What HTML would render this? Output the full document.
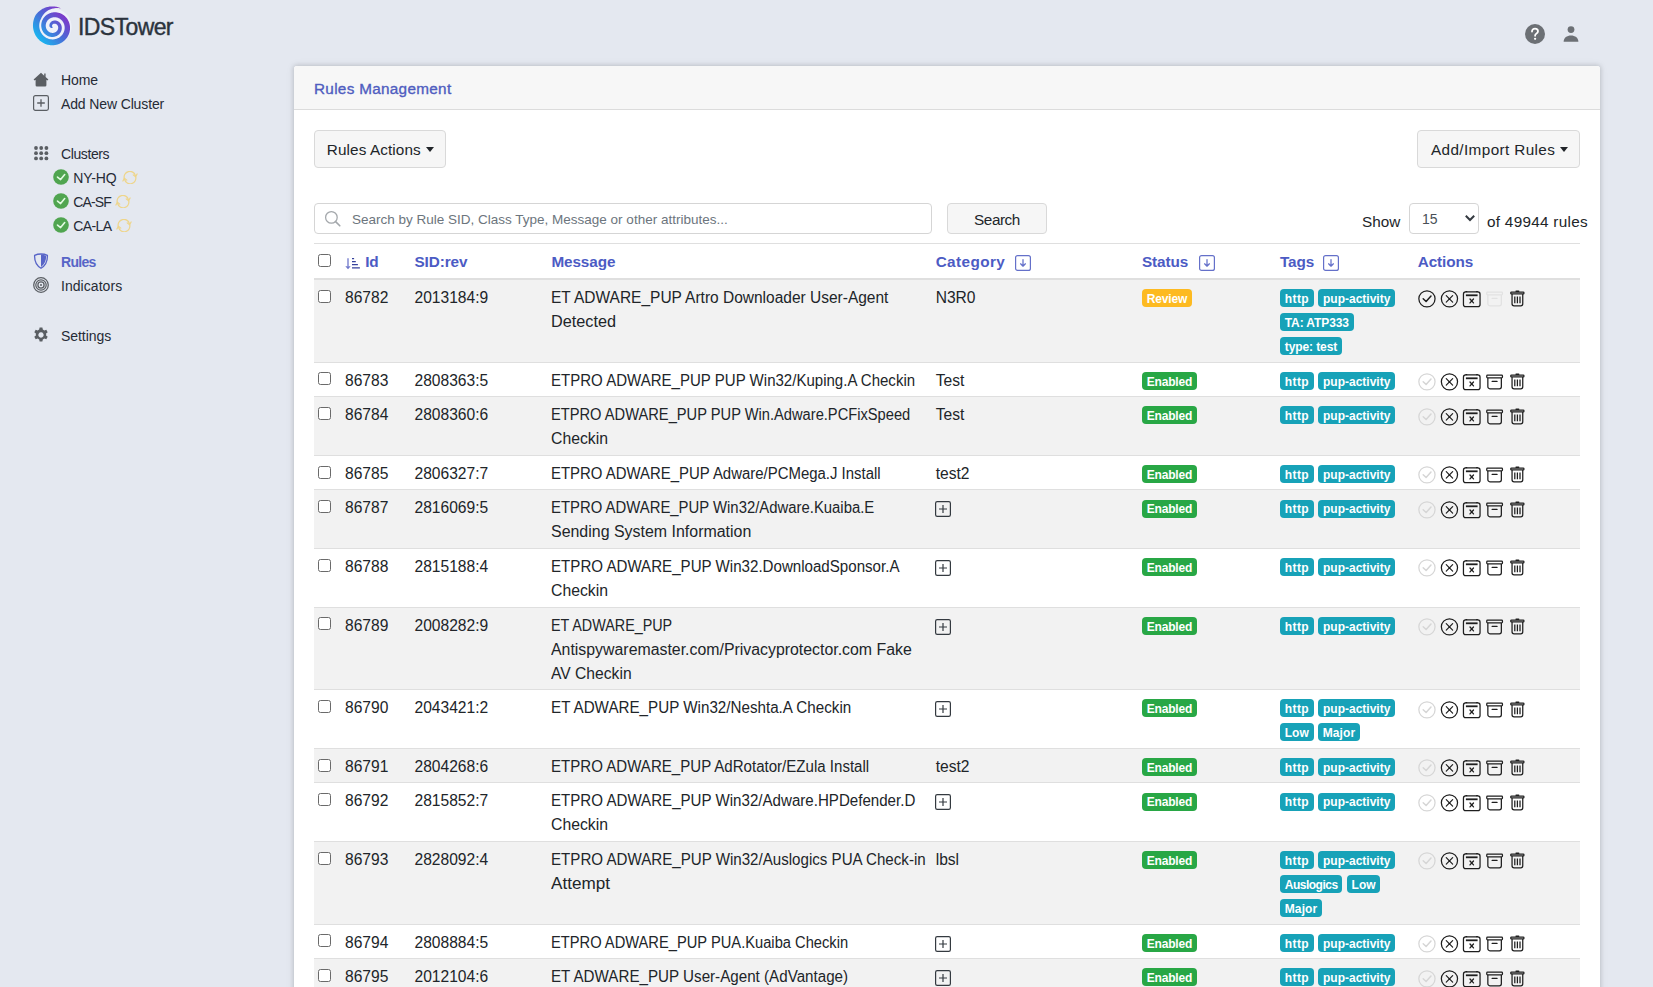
<!DOCTYPE html>
<html><head><meta charset="utf-8"><title>IDSTower - Rules</title>
<style>
*{box-sizing:border-box}
html,body{margin:0;padding:0}
body{width:1653px;height:987px;overflow:hidden;position:relative;background:#e4e8f0;font-family:"Liberation Sans",sans-serif;color:#212529;font-size:15.3px;line-height:24px}
td{font-size:15.6px}
.abs{position:absolute}
.logo-text{position:absolute;left:78px;top:11.6px;font-size:23px;line-height:30px;color:#2b333d;letter-spacing:-0.6px;-webkit-text-stroke:0.4px #2b333d}
.nav{position:absolute;left:0;font-size:14px;line-height:24px;color:#262b36;white-space:nowrap}
.nav .t{position:absolute;left:61px;top:0.6px}
.nav svg{position:absolute}
.card{position:absolute;left:294px;top:66px;width:1306px;height:940px;background:#fff;box-shadow:0 0 4px 1px rgba(0,0,0,.13),0 0 10px 1px rgba(0,0,0,.05);border-radius:3px}
.card-h{position:absolute;left:0;top:0;width:100%;height:44px;background:#f7f7f7;border-radius:3px 3px 0 0;border-bottom:1px solid #dcdcdc}
.card-h .t{position:absolute;left:20px;top:11px;color:#4f5dc0;font-size:15.3px;line-height:24px;letter-spacing:0.3px;-webkit-text-stroke:0.35px #4f5dc0}
.btn{position:absolute;background:#f6f6f6;border:1px solid #d9d9d9;border-radius:4px;color:#212529;font-size:15.3px;line-height:24px;white-space:nowrap}
.caret{display:inline-block;width:0;height:0;border-left:4.1px solid transparent;border-right:4.1px solid transparent;border-top:5px solid #212529;vertical-align:3.4px;margin-left:4.8px}
.input{position:absolute;background:#fff;border:1px solid #d5d5d5;border-radius:4px}
table{position:absolute;left:314px;top:243.4px;width:1266px;border-collapse:collapse;table-layout:fixed}
td,th{padding:6px 4.8px 3.6px;vertical-align:top;border-top:1px solid #dfdfdf;text-align:left;white-space:nowrap;overflow:visible}
th{border-bottom:2px solid #dfdfdf;color:#4c5bc4;font-weight:bold;letter-spacing:-0.1px}
tr.odd td{background:#f2f2f2}
.cb{display:inline-block;width:13px;height:13px;border:1px solid #6a6a6a;border-radius:2.5px;background:#fff;margin-left:-0.8px;vertical-align:-1px;position:relative;top:-1.2px}
.badge{display:inline-block;font-size:12px;font-weight:bold;line-height:12px;padding:3.8px 4.8px 2.2px;border-radius:4px;color:#fff;vertical-align:0px;white-space:nowrap}
.bw{background:#fdba21}
.bs{background:#28a745}
.bi{background:#17a2b8}
.ic{display:inline-block;width:22.7px;height:18px;color:#1e1e1e;vertical-align:-5.5px}
.ic svg{display:block;overflow:visible}
.ic.dis{color:#d6d6d6}
.ic.dis2{color:#e2e2e2}
.pbox svg{display:inline-block;vertical-align:-4px;margin-left:-1px}
td.msg .ml{display:inline-block;position:relative;left:-1.3px;transform-origin:0 0}
.bi.h{letter-spacing:0.45px}
.sbox svg{display:inline-block;vertical-align:-3.5px;margin-left:11px}
</style></head>
<body>
<!-- logo -->
<svg class="abs" style="left:28px;top:2px" width="51" height="51" viewBox="0 0 48 48"><defs><linearGradient id="lg" x1="0.1" y1="0.9" x2="0.9" y2="0.1"><stop offset="0" stop-color="#12c0f4"/><stop offset="0.5" stop-color="#4a6bd6"/><stop offset="1" stop-color="#8e28c6"/></linearGradient></defs><circle cx="24" cy="23.3" r="17" fill="#eef1fa"/><path d="M23.34 24.50 L23.27 24.51 L23.19 24.51 L23.12 24.51 L23.04 24.51 L22.93 24.53 L22.82 24.55 L22.71 24.57 L22.59 24.57 L22.47 24.57 L22.35 24.56 L22.23 24.55 L22.10 24.52 L21.98 24.49 L21.85 24.45 L21.72 24.41 L21.59 24.35 L21.46 24.29 L21.34 24.22 L21.21 24.14 L21.09 24.05 L20.97 23.96 L20.85 23.85 L20.73 23.74 L20.62 23.62 L20.52 23.49 L20.41 23.36 L20.32 23.21 L20.28 23.07 L20.24 22.91 L20.21 22.76 L20.18 22.60 L20.16 22.44 L20.15 22.28 L20.14 22.11 L20.14 21.94 L20.15 21.77 L20.16 21.60 L20.19 21.43 L20.22 21.26 L20.26 21.09 L20.30 20.91 L20.35 20.74 L20.42 20.57 L20.48 20.40 L20.56 20.23 L20.64 20.06 L20.74 19.90 L20.84 19.73 L20.94 19.57 L21.06 19.42 L21.18 19.26 L21.31 19.11 L21.45 18.97 L21.60 18.83 L21.75 18.69 L21.91 18.56 L22.07 18.43 L22.24 18.31 L22.42 18.20 L22.61 18.09 L22.80 17.99 L22.99 17.90 L23.19 17.81 L23.40 17.74 L23.61 17.67 L23.83 17.60 L24.05 17.55 L24.27 17.51 L24.50 17.47 L24.73 17.44 L24.96 17.42 L25.20 17.42 L25.43 17.42 L25.67 17.43 L25.91 17.45 L26.15 17.48 L26.39 17.52 L26.64 17.57 L26.88 17.63 L27.12 17.70 L27.36 17.79 L27.59 17.88 L27.83 17.98 L28.06 18.09 L28.29 18.21 L28.51 18.35 L28.73 18.49 L28.95 18.64 L29.16 18.80 L29.37 18.98 L29.57 19.16 L29.77 19.35 L29.96 19.55 L30.14 19.75 L30.31 19.97 L30.48 20.20 L30.64 20.43 L30.79 20.67 L30.93 20.92 L31.06 21.17 L31.18 21.44 L31.29 21.71 L31.40 21.98 L31.49 22.26 L31.57 22.55 L31.64 22.84 L31.70 23.13 L31.74 23.43 L31.78 23.73 L31.80 24.04 L31.81 24.35 L31.81 24.66 L31.80 24.97 L31.77 25.28 L31.73 25.59 L31.68 25.91 L31.61 26.22 L31.54 26.53 L31.45 26.84 L31.34 27.15 L31.23 27.46 L31.10 27.76 L30.95 28.06 L30.80 28.35 L30.63 28.64 L30.45 28.92 L30.26 29.20 L30.06 29.47 L29.84 29.74 L29.62 30.00 L29.38 30.25 L29.13 30.49 L28.87 30.72 L28.60 30.94 L28.31 31.16 L28.02 31.36 L27.72 31.55 L27.41 31.74 L27.10 31.91 L26.77 32.06 L26.44 32.21 L26.09 32.34 L25.75 32.46 L25.39 32.57 L25.03 32.66 L24.67 32.74 L24.30 32.80 L23.92 32.85 L23.55 32.89 L23.16 32.91 L22.78 32.92 L22.40 32.91 L22.01 32.88 L21.62 32.84 L21.24 32.78 L20.85 32.71 L20.47 32.63 L20.08 32.52 L19.70 32.40 L19.33 32.27 L18.95 32.12 L18.59 31.95 L18.22 31.77 L17.87 31.58 L17.51 31.37 L17.17 31.14 L16.83 30.90 L16.51 30.65 L16.19 30.38 L15.88 30.10 L15.58 29.80 L15.29 29.50 L15.01 29.18 L14.74 28.84 L14.49 28.50 L14.25 28.14 L14.02 27.77 L13.81 27.40 L13.61 27.01 L13.42 26.61 L13.25 26.21 L13.10 25.80 L12.96 25.38 L12.83 24.95 L12.73 24.51 L12.64 24.07 L12.57 23.63 L12.51 23.18 L12.47 22.73 L12.45 22.27 L12.45 21.81 L12.47 21.35 L12.50 20.89 L12.56 20.43 L12.63 19.97 L12.72 19.51 L12.83 19.05 L12.95 18.60 L13.10 18.15 L13.26 17.70 L13.44 17.26 L13.64 16.83 L13.86 16.40 L14.10 15.98 L14.35 15.56 L14.62 15.16 L14.91 14.76 L15.21 14.38 L15.53 14.00 L15.86 13.64 L16.21 13.29 L16.58 12.95 L16.96 12.63 L17.35 12.32 L17.76 12.02 L18.18 11.74 L18.61 11.48 L19.06 11.23 L19.51 11.00 L19.98 10.78 L20.46 10.58 L20.94 10.41 L21.43 10.25 L21.93 10.10 L22.44 9.98 L22.96 9.88 L23.48 9.80 L24.00 9.74 L24.53 9.70 L25.06 9.68 L25.59 9.68 L26.13 9.70 L26.66 9.74 L27.20 9.81 L27.73 9.89 L28.27 10.00 L28.80 10.13 L29.32 10.28 L29.84 10.45 L30.36 10.64 L30.87 10.85 L31.37 11.09 L31.87 11.34 L32.35 11.61 L32.83 11.91 L33.30 12.22 L33.75 12.55 L34.20 12.90 L34.63 13.27 L35.04 13.66 L35.45 14.07 L35.84 14.49 L36.21 14.93 L36.56 15.38 L36.90 15.85 L37.22 16.33 L37.53 16.83 L37.81 17.34 L38.08 17.87 L38.32 18.40 L38.55 18.95 L38.75 19.50 L38.93 20.07 L39.09 20.64 L39.23 21.22 L39.34 21.81 L39.44 22.41 L39.51 23.01 L39.55 23.61 L39.57 24.22 L39.57 24.82 L39.55 25.44 L39.50 26.05 L39.42 26.66 L39.33 27.27 L39.20 27.87 L39.06 28.47 L38.89 29.07 L38.69 29.67 L38.47 30.25 L38.23 30.83 L37.97 31.40 L37.68 31.97 L37.37 32.52 L37.03 33.06 L36.68 33.59 L36.30 34.10 L35.90 34.61 L35.48 35.09 L35.04 35.57 L34.59 36.02 L34.11 36.46 L33.61 36.88 L33.10 37.29 L32.57 37.67 L32.02 38.03 L31.46 38.38 L30.88 38.70 L30.29 39.00 L29.69 39.27 L29.08 39.53 L28.45 39.76 L27.81 39.96 L27.17 40.14 L26.51 40.30 L25.85 40.43 L25.18 40.53 L24.50 40.61 L23.83 40.67 L23.14 40.69 L22.46 40.69 L21.77 40.66 L21.09 40.61 L20.40 40.53 L19.72 40.42 L19.04 40.28 L18.36 40.12 L17.69 39.93 L17.02 39.71 L16.37 39.47 L15.72 39.20 L15.08 38.90 L14.45 38.58 L13.83 38.23 L13.22 37.86 L12.63 37.46 L12.05 37.04 L11.49 36.60 L10.94 36.13 L10.41 35.64 L9.90 35.13 L9.41 34.60 L8.94 34.05 L8.49 33.48 L8.06 32.89 L7.65 32.28 L7.27 31.65 L6.91 31.01 L6.58 30.35 L6.27 29.68 L5.98 29.00 L5.72 28.30 L5.49 27.59 L5.29 26.87 L5.11 26.15 L4.97 25.41 L4.85 24.67 L4.76 23.92 L4.70 23.16 L4.67 22.41 L4.67 21.65 L4.70 20.88 L4.75 20.12 L4.84 19.36 L4.96 18.60 L5.11 17.85 L5.29 17.10 L5.50 16.35 L5.73 15.62 L6.00 14.89 L6.30 14.16 L6.62 13.45 L6.98 12.76 L7.36 12.07 L7.80 11.42 L8.30 10.82 L8.83 10.24 L9.38 9.68 L9.95 9.15 L10.54 8.64 L11.14 8.15 L11.77 7.69 L12.41 7.26 L13.06 6.85 L13.73 6.47 L14.41 6.12 L15.11 5.79 L15.82 5.50 L16.53 5.23 L17.25 4.99 L17.98 4.78 L18.72 4.60 L19.46 4.45 L20.21 4.33 L20.96 4.24 L21.71 4.17 L22.46 4.14 L23.20 4.14 L23.95 4.17 L24.69 4.22 L25.43 4.31 L26.16 4.43 L26.89 4.57 L27.60 4.74 L28.31 4.94 L29.01 5.17 L29.70 5.42 L30.37 5.70 L31.03 6.00 L31.03 6.00 L30.31 5.87 L29.58 5.77 L28.86 5.70 L28.14 5.66 L27.43 5.65 L26.72 5.66 L26.02 5.71 L25.32 5.78 L24.64 5.88 L23.96 6.00 L23.29 6.15 L22.64 6.33 L22.00 6.53 L21.37 6.75 L20.75 7.00 L20.15 7.27 L19.57 7.56 L19.00 7.87 L18.45 8.20 L17.92 8.56 L17.41 8.92 L16.92 9.31 L16.44 9.71 L15.99 10.13 L15.55 10.56 L15.14 11.01 L14.75 11.47 L14.38 11.94 L14.04 12.42 L13.71 12.91 L13.41 13.41 L13.13 13.91 L12.88 14.42 L12.64 14.94 L12.39 15.44 L12.13 15.92 L11.89 16.41 L11.66 16.90 L11.46 17.41 L11.28 17.92 L11.12 18.44 L10.98 18.96 L10.86 19.48 L10.76 20.01 L10.68 20.54 L10.62 21.07 L10.58 21.60 L10.57 22.13 L10.57 22.66 L10.60 23.19 L10.65 23.71 L10.71 24.23 L10.80 24.75 L10.91 25.26 L11.03 25.76 L11.18 26.26 L11.34 26.75 L11.53 27.23 L11.73 27.71 L11.95 28.17 L12.18 28.62 L12.44 29.06 L12.71 29.50 L12.99 29.91 L13.29 30.32 L13.61 30.71 L13.94 31.09 L14.28 31.46 L14.64 31.81 L15.01 32.14 L15.39 32.46 L15.78 32.76 L16.18 33.05 L16.59 33.32 L17.01 33.57 L17.44 33.81 L17.88 34.02 L18.32 34.22 L18.77 34.41 L19.22 34.57 L19.68 34.71 L20.15 34.84 L20.61 34.95 L21.08 35.04 L21.55 35.11 L22.02 35.16 L22.49 35.19 L22.96 35.20 L23.43 35.20 L23.90 35.18 L24.37 35.14 L24.83 35.08 L25.29 35.00 L25.74 34.91 L26.19 34.80 L26.63 34.67 L27.06 34.52 L27.49 34.36 L27.91 34.18 L28.32 33.99 L28.72 33.78 L29.11 33.56 L29.49 33.32 L29.86 33.07 L30.22 32.80 L30.56 32.52 L30.90 32.23 L31.22 31.93 L31.53 31.61 L31.82 31.29 L32.10 30.95 L32.37 30.61 L32.62 30.26 L32.86 29.89 L33.08 29.52 L33.28 29.15 L33.47 28.76 L33.65 28.38 L33.81 27.98 L33.95 27.58 L34.08 27.18 L34.19 26.77 L34.28 26.36 L34.36 25.95 L34.42 25.54 L34.46 25.13 L34.49 24.72 L34.50 24.31 L34.50 23.90 L34.48 23.49 L34.44 23.08 L34.39 22.68 L34.32 22.28 L34.24 21.89 L34.14 21.50 L34.03 21.11 L33.90 20.74 L33.76 20.37 L33.60 20.00 L33.43 19.65 L33.25 19.30 L33.06 18.96 L32.85 18.63 L32.63 18.31 L32.40 18.00 L32.16 17.70 L31.90 17.41 L31.64 17.14 L31.37 16.87 L31.09 16.62 L30.80 16.37 L30.50 16.15 L30.19 15.93 L29.88 15.73 L29.56 15.54 L29.23 15.36 L28.90 15.20 L28.57 15.05 L28.23 14.91 L27.88 14.79 L27.54 14.69 L27.19 14.59 L26.84 14.51 L26.48 14.45 L26.13 14.40 L25.78 14.36 L25.42 14.34 L25.07 14.33 L24.72 14.34 L24.37 14.36 L24.02 14.39 L23.68 14.44 L23.34 14.50 L23.01 14.57 L22.67 14.66 L22.35 14.75 L22.03 14.87 L21.71 14.99 L21.40 15.12 L21.10 15.27 L20.81 15.43 L20.52 15.59 L20.25 15.77 L19.98 15.96 L19.72 16.16 L19.46 16.36 L19.22 16.58 L18.99 16.80 L18.77 17.04 L18.55 17.28 L18.35 17.52 L18.16 17.78 L17.98 18.03 L17.81 18.30 L17.66 18.57 L17.51 18.84 L17.38 19.12 L17.26 19.41 L17.15 19.69 L17.05 19.98 L16.96 20.27 L16.89 20.57 L16.82 20.86 L16.77 21.15 L16.74 21.45 L16.71 21.74 L16.69 22.04 L16.69 22.33 L16.70 22.62 L16.72 22.91 L16.75 23.20 L16.79 23.48 L16.85 23.77 L16.91 24.04 L16.98 24.32 L17.07 24.58 L17.16 24.85 L17.27 25.11 L17.38 25.36 L17.51 25.60 L17.64 25.84 L17.78 26.08 L17.93 26.30 L18.09 26.52 L18.25 26.73 L18.43 26.94 L18.61 27.13 L18.79 27.32 L18.98 27.50 L19.18 27.67 L19.39 27.83 L19.60 27.98 L19.81 28.12 L20.03 28.25 L20.25 28.37 L20.47 28.49 L20.70 28.59 L20.93 28.69 L21.16 28.77 L21.40 28.85 L21.63 28.91 L21.87 28.97 L22.11 29.01 L22.35 29.05 L22.58 29.07 L22.82 29.09 L23.06 29.09 L23.29 29.09 L23.52 29.08 L23.75 29.06 L23.98 29.03 L24.21 28.99 L24.43 28.94 L24.65 28.88 L24.86 28.82 L25.07 28.75 L25.28 28.67 L25.48 28.58 L25.67 28.48 L25.86 28.38 L26.05 28.27 L26.23 28.15 L26.40 28.03 L26.57 27.90 L26.73 27.77 L26.88 27.63 L27.03 27.49 L27.17 27.34 L27.31 27.18 L27.43 27.02 L27.55 26.86 L27.66 26.70 L27.77 26.53 L27.86 26.36 L27.95 26.19 L28.03 26.01 L28.10 25.83 L28.17 25.65 L28.23 25.47 L28.28 25.29 L28.32 25.11 L28.35 24.93 L28.38 24.75 L28.40 24.57 L28.41 24.39 L28.41 24.21 L28.41 24.03 L28.40 23.86 L28.38 23.68 L28.36 23.51 L28.33 23.35 L28.29 23.18 L28.25 23.02 L28.20 22.86 L28.14 22.70 L28.08 22.55 L28.01 22.40 L27.94 22.26 L27.86 22.12 L27.78 21.98 L27.69 21.85 L27.60 21.73 L27.51 21.61 L27.41 21.49 L27.30 21.38 L27.19 21.28 L27.08 21.18 L26.97 21.09 L26.85 21.00 L26.74 20.92 L26.62 20.84 L26.49 20.77 L26.37 20.71 L26.24 20.65 L26.12 20.59 L25.99 20.55 L25.86 20.51 L25.74 20.47 L25.61 20.44 L25.48 20.42 L25.35 20.40 L25.23 20.39 L25.10 20.38 L24.98 20.38 L24.86 20.38 L24.74 20.39 L24.62 20.40 L24.50 20.42 L24.39 20.44 L24.27 20.47 L24.16 20.51 L24.06 20.54 L23.95 20.58 L23.85 20.63 L23.76 20.67 L23.66 20.73 L23.57 20.78 L23.49 20.84 L23.40 20.90 L23.33 20.97 L23.25 21.03 L23.18 21.10 L23.11 21.17 L23.05 21.24 L22.99 21.32 L22.94 21.40 L22.89 21.47 L22.84 21.55 L22.80 21.63 L22.76 21.71 L22.73 21.79 L22.70 21.87 L22.68 21.95 L22.66 22.03 L22.64 22.11 L22.63 22.19 L22.62 22.27 L22.62 22.34 L22.62 22.42 L22.62 22.49 L22.63 22.57 L22.64 22.64 L22.65 22.71 L22.67 22.78 L22.69 22.84 L22.71 22.91 L22.74 22.97 L22.76 23.02 L22.80 23.08 L22.83 23.13 L22.86 23.18 L22.90 23.23 L22.90 23.28 L22.89 23.32 L22.89 23.37 L22.88 23.42 L22.88 23.46 L22.89 23.51 L22.89 23.56 L22.90 23.61 L22.91 23.65 L22.92 23.70 L22.93 23.75 L22.95 23.80 L22.97 23.84 L22.99 23.89 L23.01 23.93 L23.03 23.97 L23.06 24.02 L23.09 24.06 L23.12 24.10 L23.15 24.13 L23.19 24.17 L23.22 24.20 L23.26 24.24 L23.33 24.23 L23.39 24.23 L23.45 24.22 L23.51 24.20 Z" fill="url(#lg)"/></svg>
<div class="logo-text">IDSTower</div>

<!-- nav -->
<div class="nav" style="top:67px;width:200px;height:24px">
 <svg style="left:33px;top:5px" width="16" height="15" viewBox="0 0 16 15"><path d="M8 0.8 L0.6 7.6 L1.6 8.6 L2.6 7.7 V13.2 A1.3 1.3 0 0 0 3.9 14.5 H12.1 A1.3 1.3 0 0 0 13.4 13.2 V7.7 L14.4 8.6 L15.4 7.6 L12.6 5 V1.6 H11.2 V3.7 Z" fill="#5a5e63"/></svg>
 <span class="t" style="letter-spacing:-0.1px">Home</span>
</div>
<div class="nav" style="top:91px;width:200px;height:24px">
 <svg style="left:33px;top:4px" width="16" height="16" viewBox="0 0 16 16"><rect x="0.6" y="0.6" width="14.8" height="14.8" rx="1.8" fill="none" stroke="#5a5e63" stroke-width="1.2"/><path d="M8 4.2 v7.6 M4.2 8 h7.6" stroke="#5a5e63" stroke-width="1.3"/></svg>
 <span class="t" style="letter-spacing:-0.13px">Add New Cluster</span>
</div>
<div class="nav" style="top:141px;width:200px;height:24px">
 <svg style="left:34px;top:5px" width="15" height="15" viewBox="0 0 15 15" fill="#5a5e63"><circle cx="2" cy="2" r="1.9"/><circle cx="7.2" cy="2" r="1.9"/><circle cx="12.4" cy="2" r="1.9"/><circle cx="2" cy="7.2" r="1.9"/><circle cx="7.2" cy="7.2" r="1.9"/><circle cx="12.4" cy="7.2" r="1.9"/><circle cx="2" cy="12.4" r="1.9"/><circle cx="7.2" cy="12.4" r="1.9"/><circle cx="12.4" cy="12.4" r="1.9"/></svg>
 <span class="t" style="letter-spacing:-0.4px">Clusters</span>
</div>
<div class="nav" style="top:165px;width:200px;height:24px">
 <svg style="left:53px;top:3.9px" width="16" height="16" viewBox="0 0 16 16"><circle cx="8" cy="8" r="7.8" fill="#50a550"/><path d="M4.5 8.1 L7.6 10.6 L11.7 5.6" fill="none" stroke="#e2fbe2" stroke-width="1.6" stroke-linecap="round" stroke-linejoin="round"/></svg>
 <span class="t" style="left:73.3px;letter-spacing:-0.1px">NY-HQ</span>
 <svg style="left:121.6px;top:6px" width="16" height="13" viewBox="0 0 16 13" fill="none" stroke="#eed58a" stroke-width="1.2" stroke-linecap="round" stroke-linejoin="round"><path d="M2.3 7.6 A5.7 5.7 0 0 1 13.4 4.6"/><path d="M11.2 3.9 L13.6 5.8 L15.1 3"/><path d="M13.7 5.6 A5.7 5.7 0 0 1 2.6 8.5"/><path d="M4.8 9.1 L2.4 7.2 L0.9 10"/></svg>
</div>
<div class="nav" style="top:189px;width:200px;height:24px">
 <svg style="left:53px;top:3.9px" width="16" height="16" viewBox="0 0 16 16"><circle cx="8" cy="8" r="7.8" fill="#50a550"/><path d="M4.5 8.1 L7.6 10.6 L11.7 5.6" fill="none" stroke="#e2fbe2" stroke-width="1.6" stroke-linecap="round" stroke-linejoin="round"/></svg>
 <span class="t" style="left:73.3px;letter-spacing:-0.9px">CA-SF</span>
 <svg style="left:115.2px;top:5.8px" width="16" height="13" viewBox="0 0 16 13" fill="none" stroke="#eed58a" stroke-width="1.2" stroke-linecap="round" stroke-linejoin="round"><path d="M2.3 7.6 A5.7 5.7 0 0 1 13.4 4.6"/><path d="M11.2 3.9 L13.6 5.8 L15.1 3"/><path d="M13.7 5.6 A5.7 5.7 0 0 1 2.6 8.5"/><path d="M4.8 9.1 L2.4 7.2 L0.9 10"/></svg>
</div>
<div class="nav" style="top:213px;width:200px;height:24px">
 <svg style="left:53px;top:3.9px" width="16" height="16" viewBox="0 0 16 16"><circle cx="8" cy="8" r="7.8" fill="#50a550"/><path d="M4.5 8.1 L7.6 10.6 L11.7 5.6" fill="none" stroke="#e2fbe2" stroke-width="1.6" stroke-linecap="round" stroke-linejoin="round"/></svg>
 <span class="t" style="left:73.3px;letter-spacing:-0.6px">CA-LA</span>
 <svg style="left:116.3px;top:5.5px" width="16" height="13" viewBox="0 0 16 13" fill="none" stroke="#eed58a" stroke-width="1.2" stroke-linecap="round" stroke-linejoin="round"><path d="M2.3 7.6 A5.7 5.7 0 0 1 13.4 4.6"/><path d="M11.2 3.9 L13.6 5.8 L15.1 3"/><path d="M13.7 5.6 A5.7 5.7 0 0 1 2.6 8.5"/><path d="M4.8 9.1 L2.4 7.2 L0.9 10"/></svg>
</div>

<div class="nav" style="top:249px;width:200px;height:24px">
 <svg style="left:33px;top:4px" width="16" height="16" viewBox="0 0 16 16"><path d="M8 1 C5.5 1 3.2 1.6 1.6 2.4 C1.4 8 3.5 12.5 8 15.2 C12.5 12.5 14.6 8 14.4 2.4 C12.8 1.6 10.5 1 8 1 Z" fill="none" stroke="#5764c7" stroke-width="1.3"/><path d="M8 1.6 C10 1.7 11.8 2.1 13.2 2.8 C13.2 7.6 11.4 11.6 8 14 Z" fill="#5764c7"/></svg>
 <span class="t" style="font-weight:bold;color:#5764c7;letter-spacing:-0.7px">Rules</span>
</div>
<div class="nav" style="top:273px;width:200px;height:24px">
 <svg style="left:33px;top:4px" width="16" height="16" viewBox="0 0 16 16" fill="none" stroke="#5a5e63" stroke-width="1.25"><circle cx="8" cy="8" r="7.3"/><circle cx="8" cy="8" r="5.2"/><circle cx="8" cy="8" r="3.1"/><circle cx="8" cy="8" r="1" fill="#5a5e63" stroke="none"/></svg>
 <span class="t" style="letter-spacing:0.05px">Indicators</span>
</div>
<div class="nav" style="top:323px;width:200px;height:24px">
 <svg style="left:33px;top:4px" width="16" height="16" viewBox="0 0 16 16"><path fill="#5a5e63" d="M6.6 0.5 h2.8 l0.4 2.1 a5.6 5.6 0 0 1 1.5 0.9 l2 -0.7 l1.4 2.4 l-1.6 1.4 a5.6 5.6 0 0 1 0 1.8 l1.6 1.4 l-1.4 2.4 l-2 -0.7 a5.6 5.6 0 0 1 -1.5 0.9 l-0.4 2.1 h-2.8 l-0.4 -2.1 a5.6 5.6 0 0 1 -1.5 -0.9 l-2 0.7 l-1.4 -2.4 l1.6 -1.4 a5.6 5.6 0 0 1 0 -1.8 l-1.6 -1.4 l1.4 -2.4 l2 0.7 a5.6 5.6 0 0 1 1.5 -0.9 z M8 5.3 a2.7 2.7 0 1 0 0.01 0 z"/></svg>
 <span class="t" style="letter-spacing:-0.05px">Settings</span>
</div>

<!-- top right -->
<svg class="abs" style="left:1524px;top:23px" width="22" height="22" viewBox="0 0 22 22"><circle cx="11" cy="11" r="10" fill="#6c7075"/><path d="M8 8.6 C8 6.6 9.3 5.6 11 5.6 C12.8 5.6 14 6.7 14 8.2 C14 9.6 13 10.2 12.2 10.8 C11.4 11.3 11.1 11.8 11.1 12.8" fill="none" stroke="#fff" stroke-width="1.8" stroke-linecap="round"/><circle cx="11.1" cy="15.8" r="1.15" fill="#fff"/></svg>
<svg class="abs" style="left:1562px;top:25px" width="18" height="18" viewBox="0 0 18 18"><circle cx="9" cy="4.6" r="3.4" fill="#6c7075"/><path d="M1.6 16.8 C1.6 12.6 5 10.4 9 10.4 C13 10.4 16.4 12.6 16.4 16.8 Z" fill="#6c7075"/></svg>

<div class="card">
 <div class="card-h"><span class="t">Rules Management</span></div>
</div>
<div class="btn" style="left:314px;top:130px;width:132px;height:38px;padding:7.2px 0 0 11.8px"><span style="letter-spacing:0.1px">Rules Actions</span><span class="caret"></span></div>
<div class="btn" style="left:1417px;top:130px;width:163px;height:38px;padding:7.2px 0 0 13px"><span style="letter-spacing:0.38px">Add/Import Rules</span><span class="caret"></span></div>
<div class="input" style="left:314px;top:203px;width:618px;height:31px"></div>
<svg class="abs" style="left:324px;top:210px" width="18" height="18" viewBox="0 0 18 18"><circle cx="7.4" cy="7.4" r="5.8" fill="none" stroke="#a3a7ab" stroke-width="1.25"/><path d="M11.6 11.6 L15.8 15.8" stroke="#a3a7ab" stroke-width="1.6" stroke-linecap="round"/></svg>
<div class="abs" style="left:352px;top:207.5px;font-size:13.5px;line-height:24px;color:#6c757d;white-space:nowrap">Search by Rule SID, Class Type, Message or other attributes...</div>
<div class="btn" style="left:947px;top:203px;width:100px;height:31px;padding:3.5px 0 0 0;text-align:center"><span style="letter-spacing:-0.45px">Search</span></div>
<div class="abs" style="left:1362px;top:209.5px;white-space:nowrap;letter-spacing:0px">Show</div>
<div class="input" style="left:1409px;top:203px;width:70px;height:31px"></div>
<div class="abs" style="left:1422px;top:207px;font-size:14px;color:#495057">15</div>
<svg class="abs" style="left:1464px;top:213px" width="12" height="10" viewBox="0 0 12 10"><path d="M1.8 2.8 L6 7 L10.2 2.8" fill="none" stroke="#343a40" stroke-width="2"/></svg>
<div class="abs" style="left:1487px;top:209.5px;white-space:nowrap;letter-spacing:0.28px">of 49944 rules</div>

<table>
<colgroup><col style="width:26.2px"><col style="width:69.5px"><col style="width:138.2px"><col style="width:383px"><col style="width:206.3px"><col style="width:138px"><col style="width:137.8px"><col style="width:167px"></colgroup>
<thead><tr><th><span class="cb"></span></th><th><svg width="16" height="14" viewBox="0 0 16 14" style="vertical-align:-3.5px;margin-left:-1px;margin-right:1px"><path d="M4 1.2 V9.6" stroke="#6f77cb" stroke-width="1.3"/><path d="M1.3 9.2 L6.7 9.2 L4 12.3 Z" fill="#6f77cb"/><path d="M8 1.6 h2.1 M8 4.6 h3.8 M8 7.7 h5.9 M8 10.8 h7.9" stroke="#36419c" stroke-width="1.3"/></svg> Id</th><th>SID:rev</th><th><span style="position:relative;left:-1.3px">Message</span></th><th><span style="letter-spacing:0.4px">Category</span><span style="margin-left:-1.6px"></span><span class="sbox"><svg width="16" height="16" viewBox="0 0 16 16"><rect x="0.6" y="0.6" width="14.8" height="14.8" rx="2" fill="none" stroke="#6470c9" stroke-width="1.2"/><path d="M8 4.6 v6.6 M5.6 8.8 L8 11.2 L10.4 8.8" fill="none" stroke="#6470c9" stroke-width="1.25" stroke-linecap="round" stroke-linejoin="round"/></svg></span></th><th>Status<span class="sbox"><svg width="16" height="16" viewBox="0 0 16 16"><rect x="0.6" y="0.6" width="14.8" height="14.8" rx="2" fill="none" stroke="#6470c9" stroke-width="1.2"/><path d="M8 4.6 v6.6 M5.6 8.8 L8 11.2 L10.4 8.8" fill="none" stroke="#6470c9" stroke-width="1.25" stroke-linecap="round" stroke-linejoin="round"/></svg></span></th><th>Tags<span style="margin-left:-1.8px"></span><span class="sbox"><svg width="16" height="16" viewBox="0 0 16 16"><rect x="0.6" y="0.6" width="14.8" height="14.8" rx="2" fill="none" stroke="#6470c9" stroke-width="1.2"/><path d="M8 4.6 v6.6 M5.6 8.8 L8 11.2 L10.4 8.8" fill="none" stroke="#6470c9" stroke-width="1.25" stroke-linecap="round" stroke-linejoin="round"/></svg></span></th><th>Actions</th></tr></thead>
<tbody>
<tr class="odd"><td><span class="cb"></span></td><td>86782</td><td>2013184:9</td><td class="msg"><span class="ml" style="transform:scaleX(0.9940)">ET ADWARE_PUP Artro Downloader User-Agent</span><br><span class="ml" style="transform:scaleX(1.0413)">Detected</span></td><td>N3R0</td><td><span class="badge bw" style="letter-spacing:-0.15px">Review</span></td><td class="tags"><span class="badge bi" style="letter-spacing:0.4px">http</span> <span class="badge bi" style="letter-spacing:0px">pup-activity</span><br><span class="badge bi" style="letter-spacing:-0.1px">TA: ATP333</span><br><span class="badge bi" style="letter-spacing:-0.1px">type: test</span></td><td class="acts"><span class="ic"><svg width="23" height="18" viewBox="0 0 23 18"><circle cx="8.95" cy="8.85" r="8.1" fill="none" stroke="currentColor" stroke-width="1.25"/><path d="M5.2 8.7 L8.1 11.5 L13 6.1" fill="none" stroke="currentColor" stroke-width="1.5" stroke-linecap="round" stroke-linejoin="round"/></svg></span><span class="ic"><svg width="23" height="18" viewBox="0 0 23 18"><circle cx="9.45" cy="8.85" r="8.1" fill="none" stroke="currentColor" stroke-width="1.25"/><path d="M6.25 5.65 L12.65 12.05 M12.65 5.65 L6.25 12.05" fill="none" stroke="currentColor" stroke-width="1.2" stroke-linecap="round"/></svg></span><span class="ic"><svg width="23" height="18" viewBox="0 0 23 18"><rect x="0.45" y="1.95" width="16.6" height="14.7" rx="2.2" fill="none" stroke="currentColor" stroke-width="1.25"/><rect x="2.6" y="1" width="1.6" height="1.2" fill="currentColor"/><rect x="13.2" y="1" width="1.6" height="1.2" fill="currentColor"/><rect x="2.9" y="4.4" width="11.7" height="1.8" fill="currentColor"/><path d="M7 9 L10.5 12.9 M10.5 9 L7 12.9" stroke="currentColor" stroke-width="1.3" stroke-linecap="round"/></svg></span><span class="ic dis2"><svg width="23" height="18" viewBox="0 0 23 18"><rect x="0.75" y="2.15" width="15.7" height="2.7" rx="0.8" fill="none" stroke="currentColor" stroke-width="1.25"/><path d="M1.85 4.9 V13.75 a2 2 0 0 0 2 2 H13.35 a2 2 0 0 0 2 -2 V4.9" fill="none" stroke="currentColor" stroke-width="1.25"/><path d="M6.2 8.4 H11" stroke="currentColor" stroke-width="1.4" stroke-linecap="round"/></svg></span><span class="ic"><svg width="23" height="18" viewBox="0 0 23 18"><rect x="6.4" y="0.4" width="4" height="1.6" rx="0.7" fill="currentColor"/><rect x="1.75" y="2.05" width="13.2" height="1.9" rx="0.8" fill="none" stroke="currentColor" stroke-width="1.25"/><path d="M3.05 3.9 V13.75 a2 2 0 0 0 2 2 H11.75 a2 2 0 0 0 2 -2 V3.9" fill="none" stroke="currentColor" stroke-width="1.25"/><path d="M5.8 6.4 V13.3 M8.4 6.4 V13.3 M11 6.4 V13.3" stroke="currentColor" stroke-width="1.25"/></svg></span></td></tr>
<tr class="even"><td><span class="cb"></span></td><td>86783</td><td>2808363:5</td><td class="msg"><span class="ml" style="transform:scaleX(0.9643)">ETPRO ADWARE_PUP PUP Win32/Kuping.A Checkin</span></td><td>Test</td><td><span class="badge bs" style="letter-spacing:-0.2px">Enabled</span></td><td class="tags"><span class="badge bi" style="letter-spacing:0.4px">http</span> <span class="badge bi" style="letter-spacing:0px">pup-activity</span></td><td class="acts"><span class="ic dis"><svg width="23" height="18" viewBox="0 0 23 18"><circle cx="8.95" cy="8.85" r="8.1" fill="none" stroke="currentColor" stroke-width="1.25"/><path d="M5.2 8.7 L8.1 11.5 L13 6.1" fill="none" stroke="currentColor" stroke-width="1.5" stroke-linecap="round" stroke-linejoin="round"/></svg></span><span class="ic"><svg width="23" height="18" viewBox="0 0 23 18"><circle cx="9.45" cy="8.85" r="8.1" fill="none" stroke="currentColor" stroke-width="1.25"/><path d="M6.25 5.65 L12.65 12.05 M12.65 5.65 L6.25 12.05" fill="none" stroke="currentColor" stroke-width="1.2" stroke-linecap="round"/></svg></span><span class="ic"><svg width="23" height="18" viewBox="0 0 23 18"><rect x="0.45" y="1.95" width="16.6" height="14.7" rx="2.2" fill="none" stroke="currentColor" stroke-width="1.25"/><rect x="2.6" y="1" width="1.6" height="1.2" fill="currentColor"/><rect x="13.2" y="1" width="1.6" height="1.2" fill="currentColor"/><rect x="2.9" y="4.4" width="11.7" height="1.8" fill="currentColor"/><path d="M7 9 L10.5 12.9 M10.5 9 L7 12.9" stroke="currentColor" stroke-width="1.3" stroke-linecap="round"/></svg></span><span class="ic"><svg width="23" height="18" viewBox="0 0 23 18"><rect x="0.75" y="2.15" width="15.7" height="2.7" rx="0.8" fill="none" stroke="currentColor" stroke-width="1.25"/><path d="M1.85 4.9 V13.75 a2 2 0 0 0 2 2 H13.35 a2 2 0 0 0 2 -2 V4.9" fill="none" stroke="currentColor" stroke-width="1.25"/><path d="M6.2 8.4 H11" stroke="currentColor" stroke-width="1.4" stroke-linecap="round"/></svg></span><span class="ic"><svg width="23" height="18" viewBox="0 0 23 18"><rect x="6.4" y="0.4" width="4" height="1.6" rx="0.7" fill="currentColor"/><rect x="1.75" y="2.05" width="13.2" height="1.9" rx="0.8" fill="none" stroke="currentColor" stroke-width="1.25"/><path d="M3.05 3.9 V13.75 a2 2 0 0 0 2 2 H11.75 a2 2 0 0 0 2 -2 V3.9" fill="none" stroke="currentColor" stroke-width="1.25"/><path d="M5.8 6.4 V13.3 M8.4 6.4 V13.3 M11 6.4 V13.3" stroke="currentColor" stroke-width="1.25"/></svg></span></td></tr>
<tr class="odd"><td><span class="cb"></span></td><td>86784</td><td>2808360:6</td><td class="msg"><span class="ml" style="transform:scaleX(0.9406)">ETPRO ADWARE_PUP PUP Win.Adware.PCFixSpeed</span><br><span class="ml" style="transform:scaleX(1.0116)">Checkin</span></td><td>Test</td><td><span class="badge bs" style="letter-spacing:-0.2px">Enabled</span></td><td class="tags"><span class="badge bi" style="letter-spacing:0.4px">http</span> <span class="badge bi" style="letter-spacing:0px">pup-activity</span></td><td class="acts"><span class="ic dis"><svg width="23" height="18" viewBox="0 0 23 18"><circle cx="8.95" cy="8.85" r="8.1" fill="none" stroke="currentColor" stroke-width="1.25"/><path d="M5.2 8.7 L8.1 11.5 L13 6.1" fill="none" stroke="currentColor" stroke-width="1.5" stroke-linecap="round" stroke-linejoin="round"/></svg></span><span class="ic"><svg width="23" height="18" viewBox="0 0 23 18"><circle cx="9.45" cy="8.85" r="8.1" fill="none" stroke="currentColor" stroke-width="1.25"/><path d="M6.25 5.65 L12.65 12.05 M12.65 5.65 L6.25 12.05" fill="none" stroke="currentColor" stroke-width="1.2" stroke-linecap="round"/></svg></span><span class="ic"><svg width="23" height="18" viewBox="0 0 23 18"><rect x="0.45" y="1.95" width="16.6" height="14.7" rx="2.2" fill="none" stroke="currentColor" stroke-width="1.25"/><rect x="2.6" y="1" width="1.6" height="1.2" fill="currentColor"/><rect x="13.2" y="1" width="1.6" height="1.2" fill="currentColor"/><rect x="2.9" y="4.4" width="11.7" height="1.8" fill="currentColor"/><path d="M7 9 L10.5 12.9 M10.5 9 L7 12.9" stroke="currentColor" stroke-width="1.3" stroke-linecap="round"/></svg></span><span class="ic"><svg width="23" height="18" viewBox="0 0 23 18"><rect x="0.75" y="2.15" width="15.7" height="2.7" rx="0.8" fill="none" stroke="currentColor" stroke-width="1.25"/><path d="M1.85 4.9 V13.75 a2 2 0 0 0 2 2 H13.35 a2 2 0 0 0 2 -2 V4.9" fill="none" stroke="currentColor" stroke-width="1.25"/><path d="M6.2 8.4 H11" stroke="currentColor" stroke-width="1.4" stroke-linecap="round"/></svg></span><span class="ic"><svg width="23" height="18" viewBox="0 0 23 18"><rect x="6.4" y="0.4" width="4" height="1.6" rx="0.7" fill="currentColor"/><rect x="1.75" y="2.05" width="13.2" height="1.9" rx="0.8" fill="none" stroke="currentColor" stroke-width="1.25"/><path d="M3.05 3.9 V13.75 a2 2 0 0 0 2 2 H11.75 a2 2 0 0 0 2 -2 V3.9" fill="none" stroke="currentColor" stroke-width="1.25"/><path d="M5.8 6.4 V13.3 M8.4 6.4 V13.3 M11 6.4 V13.3" stroke="currentColor" stroke-width="1.25"/></svg></span></td></tr>
<tr class="even"><td><span class="cb"></span></td><td>86785</td><td>2806327:7</td><td class="msg"><span class="ml" style="transform:scaleX(0.9580)">ETPRO ADWARE_PUP Adware/PCMega.J Install</span></td><td>test2</td><td><span class="badge bs" style="letter-spacing:-0.2px">Enabled</span></td><td class="tags"><span class="badge bi" style="letter-spacing:0.4px">http</span> <span class="badge bi" style="letter-spacing:0px">pup-activity</span></td><td class="acts"><span class="ic dis"><svg width="23" height="18" viewBox="0 0 23 18"><circle cx="8.95" cy="8.85" r="8.1" fill="none" stroke="currentColor" stroke-width="1.25"/><path d="M5.2 8.7 L8.1 11.5 L13 6.1" fill="none" stroke="currentColor" stroke-width="1.5" stroke-linecap="round" stroke-linejoin="round"/></svg></span><span class="ic"><svg width="23" height="18" viewBox="0 0 23 18"><circle cx="9.45" cy="8.85" r="8.1" fill="none" stroke="currentColor" stroke-width="1.25"/><path d="M6.25 5.65 L12.65 12.05 M12.65 5.65 L6.25 12.05" fill="none" stroke="currentColor" stroke-width="1.2" stroke-linecap="round"/></svg></span><span class="ic"><svg width="23" height="18" viewBox="0 0 23 18"><rect x="0.45" y="1.95" width="16.6" height="14.7" rx="2.2" fill="none" stroke="currentColor" stroke-width="1.25"/><rect x="2.6" y="1" width="1.6" height="1.2" fill="currentColor"/><rect x="13.2" y="1" width="1.6" height="1.2" fill="currentColor"/><rect x="2.9" y="4.4" width="11.7" height="1.8" fill="currentColor"/><path d="M7 9 L10.5 12.9 M10.5 9 L7 12.9" stroke="currentColor" stroke-width="1.3" stroke-linecap="round"/></svg></span><span class="ic"><svg width="23" height="18" viewBox="0 0 23 18"><rect x="0.75" y="2.15" width="15.7" height="2.7" rx="0.8" fill="none" stroke="currentColor" stroke-width="1.25"/><path d="M1.85 4.9 V13.75 a2 2 0 0 0 2 2 H13.35 a2 2 0 0 0 2 -2 V4.9" fill="none" stroke="currentColor" stroke-width="1.25"/><path d="M6.2 8.4 H11" stroke="currentColor" stroke-width="1.4" stroke-linecap="round"/></svg></span><span class="ic"><svg width="23" height="18" viewBox="0 0 23 18"><rect x="6.4" y="0.4" width="4" height="1.6" rx="0.7" fill="currentColor"/><rect x="1.75" y="2.05" width="13.2" height="1.9" rx="0.8" fill="none" stroke="currentColor" stroke-width="1.25"/><path d="M3.05 3.9 V13.75 a2 2 0 0 0 2 2 H11.75 a2 2 0 0 0 2 -2 V3.9" fill="none" stroke="currentColor" stroke-width="1.25"/><path d="M5.8 6.4 V13.3 M8.4 6.4 V13.3 M11 6.4 V13.3" stroke="currentColor" stroke-width="1.25"/></svg></span></td></tr>
<tr class="odd"><td><span class="cb"></span></td><td>86787</td><td>2816069:5</td><td class="msg"><span class="ml" style="transform:scaleX(0.9540)">ETPRO ADWARE_PUP Win32/Adware.Kuaiba.E</span><br><span class="ml" style="transform:scaleX(1.0225)">Sending System Information</span></td><td><span class="pbox"><svg width="16" height="16" viewBox="0 0 16 16"><rect x="0.6" y="0.6" width="14.8" height="14.8" rx="1.6" fill="none" stroke="#343a40" stroke-width="1.2"/><path d="M8 4 v8 M4 8 h8" stroke="#343a40" stroke-width="1.2"/></svg></span></td><td><span class="badge bs" style="letter-spacing:-0.2px">Enabled</span></td><td class="tags"><span class="badge bi" style="letter-spacing:0.4px">http</span> <span class="badge bi" style="letter-spacing:0px">pup-activity</span></td><td class="acts"><span class="ic dis"><svg width="23" height="18" viewBox="0 0 23 18"><circle cx="8.95" cy="8.85" r="8.1" fill="none" stroke="currentColor" stroke-width="1.25"/><path d="M5.2 8.7 L8.1 11.5 L13 6.1" fill="none" stroke="currentColor" stroke-width="1.5" stroke-linecap="round" stroke-linejoin="round"/></svg></span><span class="ic"><svg width="23" height="18" viewBox="0 0 23 18"><circle cx="9.45" cy="8.85" r="8.1" fill="none" stroke="currentColor" stroke-width="1.25"/><path d="M6.25 5.65 L12.65 12.05 M12.65 5.65 L6.25 12.05" fill="none" stroke="currentColor" stroke-width="1.2" stroke-linecap="round"/></svg></span><span class="ic"><svg width="23" height="18" viewBox="0 0 23 18"><rect x="0.45" y="1.95" width="16.6" height="14.7" rx="2.2" fill="none" stroke="currentColor" stroke-width="1.25"/><rect x="2.6" y="1" width="1.6" height="1.2" fill="currentColor"/><rect x="13.2" y="1" width="1.6" height="1.2" fill="currentColor"/><rect x="2.9" y="4.4" width="11.7" height="1.8" fill="currentColor"/><path d="M7 9 L10.5 12.9 M10.5 9 L7 12.9" stroke="currentColor" stroke-width="1.3" stroke-linecap="round"/></svg></span><span class="ic"><svg width="23" height="18" viewBox="0 0 23 18"><rect x="0.75" y="2.15" width="15.7" height="2.7" rx="0.8" fill="none" stroke="currentColor" stroke-width="1.25"/><path d="M1.85 4.9 V13.75 a2 2 0 0 0 2 2 H13.35 a2 2 0 0 0 2 -2 V4.9" fill="none" stroke="currentColor" stroke-width="1.25"/><path d="M6.2 8.4 H11" stroke="currentColor" stroke-width="1.4" stroke-linecap="round"/></svg></span><span class="ic"><svg width="23" height="18" viewBox="0 0 23 18"><rect x="6.4" y="0.4" width="4" height="1.6" rx="0.7" fill="currentColor"/><rect x="1.75" y="2.05" width="13.2" height="1.9" rx="0.8" fill="none" stroke="currentColor" stroke-width="1.25"/><path d="M3.05 3.9 V13.75 a2 2 0 0 0 2 2 H11.75 a2 2 0 0 0 2 -2 V3.9" fill="none" stroke="currentColor" stroke-width="1.25"/><path d="M5.8 6.4 V13.3 M8.4 6.4 V13.3 M11 6.4 V13.3" stroke="currentColor" stroke-width="1.25"/></svg></span></td></tr>
<tr class="even"><td><span class="cb"></span></td><td>86788</td><td>2815188:4</td><td class="msg"><span class="ml" style="transform:scaleX(0.9689)">ETPRO ADWARE_PUP Win32.DownloadSponsor.A</span><br><span class="ml" style="transform:scaleX(1.0116)">Checkin</span></td><td><span class="pbox"><svg width="16" height="16" viewBox="0 0 16 16"><rect x="0.6" y="0.6" width="14.8" height="14.8" rx="1.6" fill="none" stroke="#343a40" stroke-width="1.2"/><path d="M8 4 v8 M4 8 h8" stroke="#343a40" stroke-width="1.2"/></svg></span></td><td><span class="badge bs" style="letter-spacing:-0.2px">Enabled</span></td><td class="tags"><span class="badge bi" style="letter-spacing:0.4px">http</span> <span class="badge bi" style="letter-spacing:0px">pup-activity</span></td><td class="acts"><span class="ic dis"><svg width="23" height="18" viewBox="0 0 23 18"><circle cx="8.95" cy="8.85" r="8.1" fill="none" stroke="currentColor" stroke-width="1.25"/><path d="M5.2 8.7 L8.1 11.5 L13 6.1" fill="none" stroke="currentColor" stroke-width="1.5" stroke-linecap="round" stroke-linejoin="round"/></svg></span><span class="ic"><svg width="23" height="18" viewBox="0 0 23 18"><circle cx="9.45" cy="8.85" r="8.1" fill="none" stroke="currentColor" stroke-width="1.25"/><path d="M6.25 5.65 L12.65 12.05 M12.65 5.65 L6.25 12.05" fill="none" stroke="currentColor" stroke-width="1.2" stroke-linecap="round"/></svg></span><span class="ic"><svg width="23" height="18" viewBox="0 0 23 18"><rect x="0.45" y="1.95" width="16.6" height="14.7" rx="2.2" fill="none" stroke="currentColor" stroke-width="1.25"/><rect x="2.6" y="1" width="1.6" height="1.2" fill="currentColor"/><rect x="13.2" y="1" width="1.6" height="1.2" fill="currentColor"/><rect x="2.9" y="4.4" width="11.7" height="1.8" fill="currentColor"/><path d="M7 9 L10.5 12.9 M10.5 9 L7 12.9" stroke="currentColor" stroke-width="1.3" stroke-linecap="round"/></svg></span><span class="ic"><svg width="23" height="18" viewBox="0 0 23 18"><rect x="0.75" y="2.15" width="15.7" height="2.7" rx="0.8" fill="none" stroke="currentColor" stroke-width="1.25"/><path d="M1.85 4.9 V13.75 a2 2 0 0 0 2 2 H13.35 a2 2 0 0 0 2 -2 V4.9" fill="none" stroke="currentColor" stroke-width="1.25"/><path d="M6.2 8.4 H11" stroke="currentColor" stroke-width="1.4" stroke-linecap="round"/></svg></span><span class="ic"><svg width="23" height="18" viewBox="0 0 23 18"><rect x="6.4" y="0.4" width="4" height="1.6" rx="0.7" fill="currentColor"/><rect x="1.75" y="2.05" width="13.2" height="1.9" rx="0.8" fill="none" stroke="currentColor" stroke-width="1.25"/><path d="M3.05 3.9 V13.75 a2 2 0 0 0 2 2 H11.75 a2 2 0 0 0 2 -2 V3.9" fill="none" stroke="currentColor" stroke-width="1.25"/><path d="M5.8 6.4 V13.3 M8.4 6.4 V13.3 M11 6.4 V13.3" stroke="currentColor" stroke-width="1.25"/></svg></span></td></tr>
<tr class="odd"><td><span class="cb"></span></td><td>86789</td><td>2008282:9</td><td class="msg"><span class="ml" style="transform:scaleX(0.9201)">ET ADWARE_PUP</span><br><span class="ml" style="transform:scaleX(1.0179)">Antispywaremaster.com/Privacyprotector.com Fake</span><br><span class="ml" style="transform:scaleX(1.0034)">AV Checkin</span></td><td><span class="pbox"><svg width="16" height="16" viewBox="0 0 16 16"><rect x="0.6" y="0.6" width="14.8" height="14.8" rx="1.6" fill="none" stroke="#343a40" stroke-width="1.2"/><path d="M8 4 v8 M4 8 h8" stroke="#343a40" stroke-width="1.2"/></svg></span></td><td><span class="badge bs" style="letter-spacing:-0.2px">Enabled</span></td><td class="tags"><span class="badge bi" style="letter-spacing:0.4px">http</span> <span class="badge bi" style="letter-spacing:0px">pup-activity</span></td><td class="acts"><span class="ic dis"><svg width="23" height="18" viewBox="0 0 23 18"><circle cx="8.95" cy="8.85" r="8.1" fill="none" stroke="currentColor" stroke-width="1.25"/><path d="M5.2 8.7 L8.1 11.5 L13 6.1" fill="none" stroke="currentColor" stroke-width="1.5" stroke-linecap="round" stroke-linejoin="round"/></svg></span><span class="ic"><svg width="23" height="18" viewBox="0 0 23 18"><circle cx="9.45" cy="8.85" r="8.1" fill="none" stroke="currentColor" stroke-width="1.25"/><path d="M6.25 5.65 L12.65 12.05 M12.65 5.65 L6.25 12.05" fill="none" stroke="currentColor" stroke-width="1.2" stroke-linecap="round"/></svg></span><span class="ic"><svg width="23" height="18" viewBox="0 0 23 18"><rect x="0.45" y="1.95" width="16.6" height="14.7" rx="2.2" fill="none" stroke="currentColor" stroke-width="1.25"/><rect x="2.6" y="1" width="1.6" height="1.2" fill="currentColor"/><rect x="13.2" y="1" width="1.6" height="1.2" fill="currentColor"/><rect x="2.9" y="4.4" width="11.7" height="1.8" fill="currentColor"/><path d="M7 9 L10.5 12.9 M10.5 9 L7 12.9" stroke="currentColor" stroke-width="1.3" stroke-linecap="round"/></svg></span><span class="ic"><svg width="23" height="18" viewBox="0 0 23 18"><rect x="0.75" y="2.15" width="15.7" height="2.7" rx="0.8" fill="none" stroke="currentColor" stroke-width="1.25"/><path d="M1.85 4.9 V13.75 a2 2 0 0 0 2 2 H13.35 a2 2 0 0 0 2 -2 V4.9" fill="none" stroke="currentColor" stroke-width="1.25"/><path d="M6.2 8.4 H11" stroke="currentColor" stroke-width="1.4" stroke-linecap="round"/></svg></span><span class="ic"><svg width="23" height="18" viewBox="0 0 23 18"><rect x="6.4" y="0.4" width="4" height="1.6" rx="0.7" fill="currentColor"/><rect x="1.75" y="2.05" width="13.2" height="1.9" rx="0.8" fill="none" stroke="currentColor" stroke-width="1.25"/><path d="M3.05 3.9 V13.75 a2 2 0 0 0 2 2 H11.75 a2 2 0 0 0 2 -2 V3.9" fill="none" stroke="currentColor" stroke-width="1.25"/><path d="M5.8 6.4 V13.3 M8.4 6.4 V13.3 M11 6.4 V13.3" stroke="currentColor" stroke-width="1.25"/></svg></span></td></tr>
<tr class="even"><td><span class="cb"></span></td><td>86790</td><td>2043421:2</td><td class="msg"><span class="ml" style="transform:scaleX(0.9739)">ET ADWARE_PUP Win32/Neshta.A Checkin</span></td><td><span class="pbox"><svg width="16" height="16" viewBox="0 0 16 16"><rect x="0.6" y="0.6" width="14.8" height="14.8" rx="1.6" fill="none" stroke="#343a40" stroke-width="1.2"/><path d="M8 4 v8 M4 8 h8" stroke="#343a40" stroke-width="1.2"/></svg></span></td><td><span class="badge bs" style="letter-spacing:-0.2px">Enabled</span></td><td class="tags"><span class="badge bi" style="letter-spacing:0.4px">http</span> <span class="badge bi" style="letter-spacing:0px">pup-activity</span><br><span class="badge bi" style="letter-spacing:0px">Low</span> <span class="badge bi" style="letter-spacing:0.1px">Major</span></td><td class="acts"><span class="ic dis"><svg width="23" height="18" viewBox="0 0 23 18"><circle cx="8.95" cy="8.85" r="8.1" fill="none" stroke="currentColor" stroke-width="1.25"/><path d="M5.2 8.7 L8.1 11.5 L13 6.1" fill="none" stroke="currentColor" stroke-width="1.5" stroke-linecap="round" stroke-linejoin="round"/></svg></span><span class="ic"><svg width="23" height="18" viewBox="0 0 23 18"><circle cx="9.45" cy="8.85" r="8.1" fill="none" stroke="currentColor" stroke-width="1.25"/><path d="M6.25 5.65 L12.65 12.05 M12.65 5.65 L6.25 12.05" fill="none" stroke="currentColor" stroke-width="1.2" stroke-linecap="round"/></svg></span><span class="ic"><svg width="23" height="18" viewBox="0 0 23 18"><rect x="0.45" y="1.95" width="16.6" height="14.7" rx="2.2" fill="none" stroke="currentColor" stroke-width="1.25"/><rect x="2.6" y="1" width="1.6" height="1.2" fill="currentColor"/><rect x="13.2" y="1" width="1.6" height="1.2" fill="currentColor"/><rect x="2.9" y="4.4" width="11.7" height="1.8" fill="currentColor"/><path d="M7 9 L10.5 12.9 M10.5 9 L7 12.9" stroke="currentColor" stroke-width="1.3" stroke-linecap="round"/></svg></span><span class="ic"><svg width="23" height="18" viewBox="0 0 23 18"><rect x="0.75" y="2.15" width="15.7" height="2.7" rx="0.8" fill="none" stroke="currentColor" stroke-width="1.25"/><path d="M1.85 4.9 V13.75 a2 2 0 0 0 2 2 H13.35 a2 2 0 0 0 2 -2 V4.9" fill="none" stroke="currentColor" stroke-width="1.25"/><path d="M6.2 8.4 H11" stroke="currentColor" stroke-width="1.4" stroke-linecap="round"/></svg></span><span class="ic"><svg width="23" height="18" viewBox="0 0 23 18"><rect x="6.4" y="0.4" width="4" height="1.6" rx="0.7" fill="currentColor"/><rect x="1.75" y="2.05" width="13.2" height="1.9" rx="0.8" fill="none" stroke="currentColor" stroke-width="1.25"/><path d="M3.05 3.9 V13.75 a2 2 0 0 0 2 2 H11.75 a2 2 0 0 0 2 -2 V3.9" fill="none" stroke="currentColor" stroke-width="1.25"/><path d="M5.8 6.4 V13.3 M8.4 6.4 V13.3 M11 6.4 V13.3" stroke="currentColor" stroke-width="1.25"/></svg></span></td></tr>
<tr class="odd"><td><span class="cb"></span></td><td>86791</td><td>2804268:6</td><td class="msg"><span class="ml" style="transform:scaleX(0.9662)">ETPRO ADWARE_PUP AdRotator/EZula Install</span></td><td>test2</td><td><span class="badge bs" style="letter-spacing:-0.2px">Enabled</span></td><td class="tags"><span class="badge bi" style="letter-spacing:0.4px">http</span> <span class="badge bi" style="letter-spacing:0px">pup-activity</span></td><td class="acts"><span class="ic dis"><svg width="23" height="18" viewBox="0 0 23 18"><circle cx="8.95" cy="8.85" r="8.1" fill="none" stroke="currentColor" stroke-width="1.25"/><path d="M5.2 8.7 L8.1 11.5 L13 6.1" fill="none" stroke="currentColor" stroke-width="1.5" stroke-linecap="round" stroke-linejoin="round"/></svg></span><span class="ic"><svg width="23" height="18" viewBox="0 0 23 18"><circle cx="9.45" cy="8.85" r="8.1" fill="none" stroke="currentColor" stroke-width="1.25"/><path d="M6.25 5.65 L12.65 12.05 M12.65 5.65 L6.25 12.05" fill="none" stroke="currentColor" stroke-width="1.2" stroke-linecap="round"/></svg></span><span class="ic"><svg width="23" height="18" viewBox="0 0 23 18"><rect x="0.45" y="1.95" width="16.6" height="14.7" rx="2.2" fill="none" stroke="currentColor" stroke-width="1.25"/><rect x="2.6" y="1" width="1.6" height="1.2" fill="currentColor"/><rect x="13.2" y="1" width="1.6" height="1.2" fill="currentColor"/><rect x="2.9" y="4.4" width="11.7" height="1.8" fill="currentColor"/><path d="M7 9 L10.5 12.9 M10.5 9 L7 12.9" stroke="currentColor" stroke-width="1.3" stroke-linecap="round"/></svg></span><span class="ic"><svg width="23" height="18" viewBox="0 0 23 18"><rect x="0.75" y="2.15" width="15.7" height="2.7" rx="0.8" fill="none" stroke="currentColor" stroke-width="1.25"/><path d="M1.85 4.9 V13.75 a2 2 0 0 0 2 2 H13.35 a2 2 0 0 0 2 -2 V4.9" fill="none" stroke="currentColor" stroke-width="1.25"/><path d="M6.2 8.4 H11" stroke="currentColor" stroke-width="1.4" stroke-linecap="round"/></svg></span><span class="ic"><svg width="23" height="18" viewBox="0 0 23 18"><rect x="6.4" y="0.4" width="4" height="1.6" rx="0.7" fill="currentColor"/><rect x="1.75" y="2.05" width="13.2" height="1.9" rx="0.8" fill="none" stroke="currentColor" stroke-width="1.25"/><path d="M3.05 3.9 V13.75 a2 2 0 0 0 2 2 H11.75 a2 2 0 0 0 2 -2 V3.9" fill="none" stroke="currentColor" stroke-width="1.25"/><path d="M5.8 6.4 V13.3 M8.4 6.4 V13.3 M11 6.4 V13.3" stroke="currentColor" stroke-width="1.25"/></svg></span></td></tr>
<tr class="even"><td><span class="cb"></span></td><td>86792</td><td>2815852:7</td><td class="msg"><span class="ml" style="transform:scaleX(0.9686)">ETPRO ADWARE_PUP Win32/Adware.HPDefender.D</span><br><span class="ml" style="transform:scaleX(1.0116)">Checkin</span></td><td><span class="pbox"><svg width="16" height="16" viewBox="0 0 16 16"><rect x="0.6" y="0.6" width="14.8" height="14.8" rx="1.6" fill="none" stroke="#343a40" stroke-width="1.2"/><path d="M8 4 v8 M4 8 h8" stroke="#343a40" stroke-width="1.2"/></svg></span></td><td><span class="badge bs" style="letter-spacing:-0.2px">Enabled</span></td><td class="tags"><span class="badge bi" style="letter-spacing:0.4px">http</span> <span class="badge bi" style="letter-spacing:0px">pup-activity</span></td><td class="acts"><span class="ic dis"><svg width="23" height="18" viewBox="0 0 23 18"><circle cx="8.95" cy="8.85" r="8.1" fill="none" stroke="currentColor" stroke-width="1.25"/><path d="M5.2 8.7 L8.1 11.5 L13 6.1" fill="none" stroke="currentColor" stroke-width="1.5" stroke-linecap="round" stroke-linejoin="round"/></svg></span><span class="ic"><svg width="23" height="18" viewBox="0 0 23 18"><circle cx="9.45" cy="8.85" r="8.1" fill="none" stroke="currentColor" stroke-width="1.25"/><path d="M6.25 5.65 L12.65 12.05 M12.65 5.65 L6.25 12.05" fill="none" stroke="currentColor" stroke-width="1.2" stroke-linecap="round"/></svg></span><span class="ic"><svg width="23" height="18" viewBox="0 0 23 18"><rect x="0.45" y="1.95" width="16.6" height="14.7" rx="2.2" fill="none" stroke="currentColor" stroke-width="1.25"/><rect x="2.6" y="1" width="1.6" height="1.2" fill="currentColor"/><rect x="13.2" y="1" width="1.6" height="1.2" fill="currentColor"/><rect x="2.9" y="4.4" width="11.7" height="1.8" fill="currentColor"/><path d="M7 9 L10.5 12.9 M10.5 9 L7 12.9" stroke="currentColor" stroke-width="1.3" stroke-linecap="round"/></svg></span><span class="ic"><svg width="23" height="18" viewBox="0 0 23 18"><rect x="0.75" y="2.15" width="15.7" height="2.7" rx="0.8" fill="none" stroke="currentColor" stroke-width="1.25"/><path d="M1.85 4.9 V13.75 a2 2 0 0 0 2 2 H13.35 a2 2 0 0 0 2 -2 V4.9" fill="none" stroke="currentColor" stroke-width="1.25"/><path d="M6.2 8.4 H11" stroke="currentColor" stroke-width="1.4" stroke-linecap="round"/></svg></span><span class="ic"><svg width="23" height="18" viewBox="0 0 23 18"><rect x="6.4" y="0.4" width="4" height="1.6" rx="0.7" fill="currentColor"/><rect x="1.75" y="2.05" width="13.2" height="1.9" rx="0.8" fill="none" stroke="currentColor" stroke-width="1.25"/><path d="M3.05 3.9 V13.75 a2 2 0 0 0 2 2 H11.75 a2 2 0 0 0 2 -2 V3.9" fill="none" stroke="currentColor" stroke-width="1.25"/><path d="M5.8 6.4 V13.3 M8.4 6.4 V13.3 M11 6.4 V13.3" stroke="currentColor" stroke-width="1.25"/></svg></span></td></tr>
<tr class="odd"><td><span class="cb"></span></td><td>86793</td><td>2828092:4</td><td class="msg"><span class="ml" style="transform:scaleX(0.9694)">ETPRO ADWARE_PUP Win32/Auslogics PUA Check-in</span><br><span class="ml" style="transform:scaleX(1.0980)">Attempt</span></td><td>lbsl</td><td><span class="badge bs" style="letter-spacing:-0.2px">Enabled</span></td><td class="tags"><span class="badge bi" style="letter-spacing:0.4px">http</span> <span class="badge bi" style="letter-spacing:0px">pup-activity</span><br><span class="badge bi" style="letter-spacing:-0.5px">Auslogics</span> <span class="badge bi" style="letter-spacing:0px">Low</span><br><span class="badge bi" style="letter-spacing:0.1px">Major</span></td><td class="acts"><span class="ic dis"><svg width="23" height="18" viewBox="0 0 23 18"><circle cx="8.95" cy="8.85" r="8.1" fill="none" stroke="currentColor" stroke-width="1.25"/><path d="M5.2 8.7 L8.1 11.5 L13 6.1" fill="none" stroke="currentColor" stroke-width="1.5" stroke-linecap="round" stroke-linejoin="round"/></svg></span><span class="ic"><svg width="23" height="18" viewBox="0 0 23 18"><circle cx="9.45" cy="8.85" r="8.1" fill="none" stroke="currentColor" stroke-width="1.25"/><path d="M6.25 5.65 L12.65 12.05 M12.65 5.65 L6.25 12.05" fill="none" stroke="currentColor" stroke-width="1.2" stroke-linecap="round"/></svg></span><span class="ic"><svg width="23" height="18" viewBox="0 0 23 18"><rect x="0.45" y="1.95" width="16.6" height="14.7" rx="2.2" fill="none" stroke="currentColor" stroke-width="1.25"/><rect x="2.6" y="1" width="1.6" height="1.2" fill="currentColor"/><rect x="13.2" y="1" width="1.6" height="1.2" fill="currentColor"/><rect x="2.9" y="4.4" width="11.7" height="1.8" fill="currentColor"/><path d="M7 9 L10.5 12.9 M10.5 9 L7 12.9" stroke="currentColor" stroke-width="1.3" stroke-linecap="round"/></svg></span><span class="ic"><svg width="23" height="18" viewBox="0 0 23 18"><rect x="0.75" y="2.15" width="15.7" height="2.7" rx="0.8" fill="none" stroke="currentColor" stroke-width="1.25"/><path d="M1.85 4.9 V13.75 a2 2 0 0 0 2 2 H13.35 a2 2 0 0 0 2 -2 V4.9" fill="none" stroke="currentColor" stroke-width="1.25"/><path d="M6.2 8.4 H11" stroke="currentColor" stroke-width="1.4" stroke-linecap="round"/></svg></span><span class="ic"><svg width="23" height="18" viewBox="0 0 23 18"><rect x="6.4" y="0.4" width="4" height="1.6" rx="0.7" fill="currentColor"/><rect x="1.75" y="2.05" width="13.2" height="1.9" rx="0.8" fill="none" stroke="currentColor" stroke-width="1.25"/><path d="M3.05 3.9 V13.75 a2 2 0 0 0 2 2 H11.75 a2 2 0 0 0 2 -2 V3.9" fill="none" stroke="currentColor" stroke-width="1.25"/><path d="M5.8 6.4 V13.3 M8.4 6.4 V13.3 M11 6.4 V13.3" stroke="currentColor" stroke-width="1.25"/></svg></span></td></tr>
<tr class="even"><td><span class="cb"></span></td><td>86794</td><td>2808884:5</td><td class="msg"><span class="ml" style="transform:scaleX(0.9418)">ETPRO ADWARE_PUP PUA.Kuaiba Checkin</span></td><td><span class="pbox"><svg width="16" height="16" viewBox="0 0 16 16"><rect x="0.6" y="0.6" width="14.8" height="14.8" rx="1.6" fill="none" stroke="#343a40" stroke-width="1.2"/><path d="M8 4 v8 M4 8 h8" stroke="#343a40" stroke-width="1.2"/></svg></span></td><td><span class="badge bs" style="letter-spacing:-0.2px">Enabled</span></td><td class="tags"><span class="badge bi" style="letter-spacing:0.4px">http</span> <span class="badge bi" style="letter-spacing:0px">pup-activity</span></td><td class="acts"><span class="ic dis"><svg width="23" height="18" viewBox="0 0 23 18"><circle cx="8.95" cy="8.85" r="8.1" fill="none" stroke="currentColor" stroke-width="1.25"/><path d="M5.2 8.7 L8.1 11.5 L13 6.1" fill="none" stroke="currentColor" stroke-width="1.5" stroke-linecap="round" stroke-linejoin="round"/></svg></span><span class="ic"><svg width="23" height="18" viewBox="0 0 23 18"><circle cx="9.45" cy="8.85" r="8.1" fill="none" stroke="currentColor" stroke-width="1.25"/><path d="M6.25 5.65 L12.65 12.05 M12.65 5.65 L6.25 12.05" fill="none" stroke="currentColor" stroke-width="1.2" stroke-linecap="round"/></svg></span><span class="ic"><svg width="23" height="18" viewBox="0 0 23 18"><rect x="0.45" y="1.95" width="16.6" height="14.7" rx="2.2" fill="none" stroke="currentColor" stroke-width="1.25"/><rect x="2.6" y="1" width="1.6" height="1.2" fill="currentColor"/><rect x="13.2" y="1" width="1.6" height="1.2" fill="currentColor"/><rect x="2.9" y="4.4" width="11.7" height="1.8" fill="currentColor"/><path d="M7 9 L10.5 12.9 M10.5 9 L7 12.9" stroke="currentColor" stroke-width="1.3" stroke-linecap="round"/></svg></span><span class="ic"><svg width="23" height="18" viewBox="0 0 23 18"><rect x="0.75" y="2.15" width="15.7" height="2.7" rx="0.8" fill="none" stroke="currentColor" stroke-width="1.25"/><path d="M1.85 4.9 V13.75 a2 2 0 0 0 2 2 H13.35 a2 2 0 0 0 2 -2 V4.9" fill="none" stroke="currentColor" stroke-width="1.25"/><path d="M6.2 8.4 H11" stroke="currentColor" stroke-width="1.4" stroke-linecap="round"/></svg></span><span class="ic"><svg width="23" height="18" viewBox="0 0 23 18"><rect x="6.4" y="0.4" width="4" height="1.6" rx="0.7" fill="currentColor"/><rect x="1.75" y="2.05" width="13.2" height="1.9" rx="0.8" fill="none" stroke="currentColor" stroke-width="1.25"/><path d="M3.05 3.9 V13.75 a2 2 0 0 0 2 2 H11.75 a2 2 0 0 0 2 -2 V3.9" fill="none" stroke="currentColor" stroke-width="1.25"/><path d="M5.8 6.4 V13.3 M8.4 6.4 V13.3 M11 6.4 V13.3" stroke="currentColor" stroke-width="1.25"/></svg></span></td></tr>
<tr class="odd"><td><span class="cb"></span></td><td>86795</td><td>2012104:6</td><td class="msg"><span class="ml" style="transform:scaleX(0.9729)">ET ADWARE_PUP User-Agent (AdVantage)</span></td><td><span class="pbox"><svg width="16" height="16" viewBox="0 0 16 16"><rect x="0.6" y="0.6" width="14.8" height="14.8" rx="1.6" fill="none" stroke="#343a40" stroke-width="1.2"/><path d="M8 4 v8 M4 8 h8" stroke="#343a40" stroke-width="1.2"/></svg></span></td><td><span class="badge bs" style="letter-spacing:-0.2px">Enabled</span></td><td class="tags"><span class="badge bi" style="letter-spacing:0.4px">http</span> <span class="badge bi" style="letter-spacing:0px">pup-activity</span></td><td class="acts"><span class="ic dis"><svg width="23" height="18" viewBox="0 0 23 18"><circle cx="8.95" cy="8.85" r="8.1" fill="none" stroke="currentColor" stroke-width="1.25"/><path d="M5.2 8.7 L8.1 11.5 L13 6.1" fill="none" stroke="currentColor" stroke-width="1.5" stroke-linecap="round" stroke-linejoin="round"/></svg></span><span class="ic"><svg width="23" height="18" viewBox="0 0 23 18"><circle cx="9.45" cy="8.85" r="8.1" fill="none" stroke="currentColor" stroke-width="1.25"/><path d="M6.25 5.65 L12.65 12.05 M12.65 5.65 L6.25 12.05" fill="none" stroke="currentColor" stroke-width="1.2" stroke-linecap="round"/></svg></span><span class="ic"><svg width="23" height="18" viewBox="0 0 23 18"><rect x="0.45" y="1.95" width="16.6" height="14.7" rx="2.2" fill="none" stroke="currentColor" stroke-width="1.25"/><rect x="2.6" y="1" width="1.6" height="1.2" fill="currentColor"/><rect x="13.2" y="1" width="1.6" height="1.2" fill="currentColor"/><rect x="2.9" y="4.4" width="11.7" height="1.8" fill="currentColor"/><path d="M7 9 L10.5 12.9 M10.5 9 L7 12.9" stroke="currentColor" stroke-width="1.3" stroke-linecap="round"/></svg></span><span class="ic"><svg width="23" height="18" viewBox="0 0 23 18"><rect x="0.75" y="2.15" width="15.7" height="2.7" rx="0.8" fill="none" stroke="currentColor" stroke-width="1.25"/><path d="M1.85 4.9 V13.75 a2 2 0 0 0 2 2 H13.35 a2 2 0 0 0 2 -2 V4.9" fill="none" stroke="currentColor" stroke-width="1.25"/><path d="M6.2 8.4 H11" stroke="currentColor" stroke-width="1.4" stroke-linecap="round"/></svg></span><span class="ic"><svg width="23" height="18" viewBox="0 0 23 18"><rect x="6.4" y="0.4" width="4" height="1.6" rx="0.7" fill="currentColor"/><rect x="1.75" y="2.05" width="13.2" height="1.9" rx="0.8" fill="none" stroke="currentColor" stroke-width="1.25"/><path d="M3.05 3.9 V13.75 a2 2 0 0 0 2 2 H11.75 a2 2 0 0 0 2 -2 V3.9" fill="none" stroke="currentColor" stroke-width="1.25"/><path d="M5.8 6.4 V13.3 M8.4 6.4 V13.3 M11 6.4 V13.3" stroke="currentColor" stroke-width="1.25"/></svg></span></td></tr>
</tbody></table>
</body></html>
